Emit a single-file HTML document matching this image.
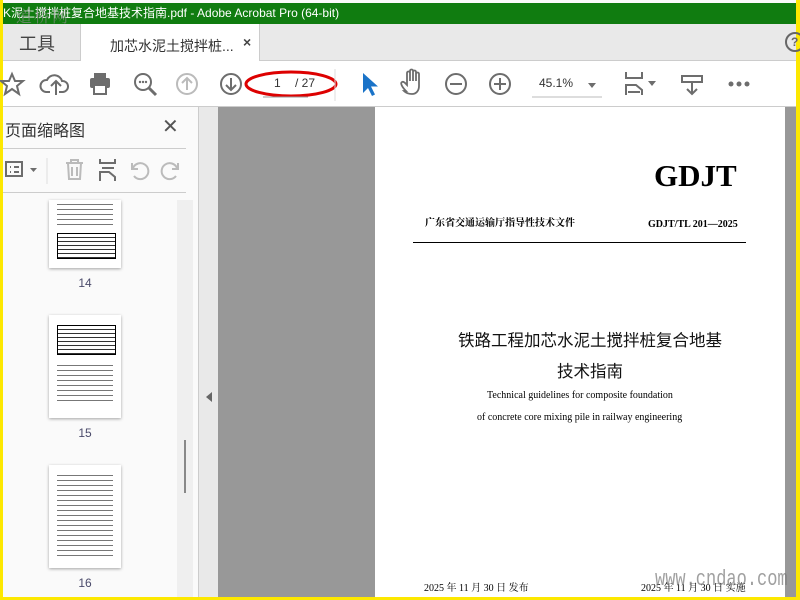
<!DOCTYPE html>
<html><head><meta charset="utf-8"><style>
*{margin:0;padding:0;box-sizing:border-box}
body{width:800px;height:600px;overflow:hidden;background:#fde800;position:relative;font-family:"Liberation Sans","Noto Sans CJK SC",sans-serif}
.a{position:absolute}
.th{position:absolute;left:49px;width:72px;background:#fff;box-shadow:0 1px 3px rgba(0,0,0,.35)}
.tx{position:absolute;left:8px;right:8px;background:repeating-linear-gradient(#fff 0 2px,#777 2px 3px,#fff 3px 5px)}
.tb{position:absolute;border:1px solid #000;background:repeating-linear-gradient(#fff 0 3px,#333 3px 4px);}
.lab{position:absolute;left:70px;width:30px;text-align:center;font-size:12px;color:#4a4a6a}
.serif{font-family:"Liberation Serif","Noto Serif CJK SC",serif;color:#000}
</style></head><body>
<div class="a" style="left:3px;top:0;width:793px;height:597px;background:#fafafa"></div>
<div class="a" style="left:3px;top:3px;width:793px;height:21px;background:#107c10;color:#fff;font-size:12px;line-height:21px;white-space:nowrap;overflow:hidden">K泥土搅拌桩复合地基技术指南.pdf - Adobe Acrobat Pro (64-bit)</div>
<div class="a" style="left:3px;top:24px;width:793px;height:37px;background:#e9e9e9;border-bottom:1px solid #ccc"></div>
<div class="a" style="left:16px;top:7px;font-size:16px;line-height:18px;color:rgba(140,140,140,.7);font-family:'Noto Serif CJK SC',serif;letter-spacing:2px">道桥网</div>
<div class="a" style="left:80px;top:24px;width:180px;height:37px;background:#fff;border-left:1px solid #ccc;border-right:1px solid #ccc"></div>
<div class="a" style="left:19px;top:30px;font-size:18px;color:#444">工具</div>
<div class="a" style="left:110px;top:36px;font-size:14px;color:#333">加芯水泥土搅拌桩...</div>
<div class="a" style="left:243px;top:34px;font-size:14px;color:#444;font-weight:bold">×</div>
<div class="a" style="left:785px;top:32px;width:20px;height:20px;border:2px solid #666;border-radius:50%;font-size:12px;color:#666;line-height:16px;padding-left:4px;font-weight:bold">?</div>
<div class="a" style="left:3px;top:61px;width:793px;height:46px;background:#fff;border-bottom:1px solid #ccc"></div>
<svg class="a" style="left:0;top:61px" width="800" height="46">
<g fill="none" stroke="#6d6d6d" stroke-width="2">
<path d="M12 13 L15 20 L23 20 L17 25 L19 33 L12 28 L5 33 L7 25 L1 20 L9 20Z"/>
<path d="M50 31 h-4 a6 6 0 0 1 1-12 a8 8 0 0 1 15 1 a5 5 0 0 1 1 11 h-4 M56 34 v-13 M51 25 l5-5 5 5"/>
<circle cx="143" cy="21" r="8"/><path d="M149 27 l7 7" stroke-width="3"/>
<circle cx="187" cy="23" r="10" stroke="#bbb"/><path d="M187 29 v-12 M182 22 l5-5 5 5" stroke="#bbb"/>
<circle cx="231" cy="23" r="10"/><path d="M231 17 v12 M226 24 l5 5 5-5"/>
<circle cx="456" cy="23" r="10"/><path d="M450 23 h12"/>
<circle cx="500" cy="23" r="10"/><path d="M494 23 h12 M500 17 v12"/>
<path d="M626 11 v6 h16 v-6 M626 34 v-10 h10 l6 5 v5 M628 31 h12"/>
<path d="M682 15 h20 v6 h-20z M692 21 v12 M687 28 l5 5 5-5"/>
</g>
<g fill="#6d6d6d"><rect x="90" y="17" width="20" height="10" rx="2"/><rect x="94" y="12" width="12" height="5"/><rect x="94" y="24" width="12" height="9" fill="#fff" stroke="#6d6d6d" stroke-width="2"/>
<circle cx="140" cy="21" r="1.2"/><circle cx="143" cy="21" r="1.2"/><circle cx="146" cy="21" r="1.2"/>
<path d="M588 22 h8 l-4 5z M648 20 h8 l-4 5z"/>
<circle cx="731" cy="23" r="2.5"/><circle cx="739" cy="23" r="2.5"/><circle cx="747" cy="23" r="2.5"/></g>
<path d="M363 12 v20 l5-5 4 8 3-1.5 -4-8 7-0z" fill="#1a73c8"/>
<path d="M406 30 c-4-4-6-8-4-9 c2-1 4 2 5 3 v-12 a1.5 1.5 0 0 1 3 0 v8 v-10 a1.5 1.5 0 0 1 3 0 v10 v-9 a1.5 1.5 0 0 1 3 0 v9 v-7 a1.5 1.5 0 0 1 3 0 v12 c0 5-3 8-7 8 c-3 0-6-1-8-3z" fill="none" stroke="#6d6d6d" stroke-width="1.8"/>
<ellipse cx="291" cy="23" rx="45" ry="12" fill="none" stroke="#d00" stroke-width="3"/>
<line x1="263" y1="36" x2="308" y2="36" stroke="#999"/>
<line x1="532" y1="36" x2="602" y2="36" stroke="#bbb"/>
<line x1="335" y1="8" x2="335" y2="40" stroke="#ddd"/>
</svg>
<div class="a" style="left:274px;top:76px;font-size:12px;color:#333">1</div>
<div class="a" style="left:295px;top:76px;font-size:12px;color:#333">/ 27</div>
<div class="a" style="left:539px;top:76px;font-size:12px;color:#333">45.1%</div>
<div class="a" style="left:5px;top:117px;font-size:16px;color:#333">页面缩略图</div>
<div class="a" style="left:162px;top:114px;font-size:20px;color:#555">✕</div>
<div class="a" style="left:3px;top:148px;width:183px;height:1px;background:#ccc"></div>
<div class="a" style="left:3px;top:192px;width:183px;height:1px;background:#ccc"></div>
<svg class="a" style="left:0;top:150px" width="200" height="42">
<g fill="none" stroke="#6d6d6d" stroke-width="2"><rect x="6" y="12" width="16" height="14"/><path d="M10 17h1M14 17h5M10 22h1M14 22h5"/></g>
<path d="M30 18h7l-3.5 4z" fill="#6d6d6d"/>
<line x1="47" y1="8" x2="47" y2="34" stroke="#ddd"/>
<g fill="none" stroke="#bbb" stroke-width="2"><path d="M66 13h17M71 13v-3h7v3M68 13l1 16h11l1-16M72 17v9M77 17v9"/>
<path d="M134 26a8 8 0 1 0-1-8M132 13v6h6M176 26a8 8 0 1 1 1-8M178 13v6h-6"/></g>
<g fill="none" stroke="#6d6d6d" stroke-width="2"><path d="M100 9v4h15v-4M100 31v-9h9l6 5v4M102 18h12" /></g>
</svg>
<div class="a" style="left:177px;top:200px;width:16px;height:397px;background:#efefef"></div>
<div class="a" style="left:184px;top:440px;width:2px;height:53px;background:#888"></div>
<div class="th" style="top:200px;height:68px"><div class="tx" style="top:2px;height:26px"></div><div class="tb" style="left:8px;top:33px;width:59px;height:26px"></div></div>
<div class="lab" style="top:276px">14</div>
<div class="th" style="top:315px;height:103px"><div class="tb" style="left:8px;top:10px;width:59px;height:30px"></div><div class="tx" style="top:48px;height:40px"></div></div>
<div class="lab" style="top:426px">15</div>
<div class="th" style="top:465px;height:103px"><div class="tx" style="top:8px;height:85px"></div></div>
<div class="lab" style="top:576px">16</div>
<div class="a" style="left:198px;top:107px;width:1px;height:490px;background:#ccc"></div>
<div class="a" style="left:199px;top:107px;width:19px;height:490px;background:#e9e9e9"></div>
<div class="a" style="left:206px;top:392px;width:0;height:0;border-top:5px solid transparent;border-bottom:5px solid transparent;border-right:6px solid #666"></div>
<div class="a" style="left:218px;top:107px;width:578px;height:490px;background:#989898"></div>
<div class="a" style="left:375px;top:107px;width:410px;height:490px;background:#fff"></div>
<div class="a serif" style="left:654px;top:158px;font-size:31px;font-weight:bold">GDJT</div>
<div class="a serif" style="left:425px;top:217px;font-size:10px;line-height:14px;font-weight:bold">广东省交通运输厅指导性技术文件</div>
<div class="a serif" style="left:648px;top:217px;font-size:10px;line-height:14px;font-weight:bold;padding-top:1px">GDJT/TL 201—2025</div>
<div class="a" style="left:413px;top:242px;width:333px;height:1px;background:#000"></div>
<div class="a" style="left:458px;top:327px;font-size:16.5px;color:#111;font-family:'Noto Sans CJK SC',sans-serif">铁路工程加芯水泥土搅拌桩复合地基</div>
<div class="a" style="left:557px;top:358px;font-size:16.5px;color:#111;font-family:'Noto Sans CJK SC',sans-serif">技术指南</div>
<div class="a serif" style="left:487px;top:390px;font-size:10px">Technical guidelines for composite foundation</div>
<div class="a serif" style="left:477px;top:412px;font-size:10px">of concrete core mixing pile in railway engineering</div>
<div class="a serif" style="left:424px;top:579px;font-size:10px">2025 年 11 月 30 日  发布</div>
<div class="a serif" style="left:641px;top:579px;font-size:10px">2025 年 11 月 30 日  实施</div>
<div class="a" style="left:655px;top:568px;font-size:17px;line-height:20px;color:rgba(120,120,120,.7);font-family:'Liberation Mono',monospace;transform:scaleY(1.3);transform-origin:left top">www.cndao.com</div>
</body></html>
